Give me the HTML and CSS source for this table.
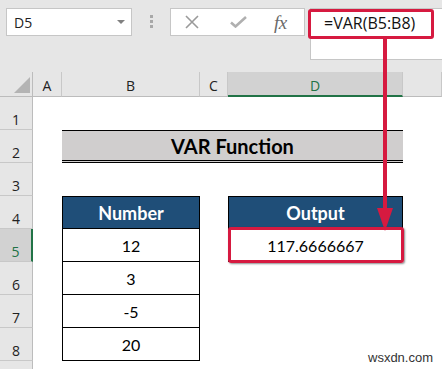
FILE: index.html
```html
<!DOCTYPE html>
<html>
<head>
<meta charset="utf-8">
<title>VAR Function</title>
<link rel="stylesheet" href="styles.css">
</head>
<body>
<div class="app">
  <div class="toolbar">
    <div class="namebox"><span>D5</span><span class="caret"></span></div>
    <div class="grip"><i></i><i></i><i></i></div>
    <div class="fbuttons">
      <svg class="ic-x" width="14" height="14" viewBox="0 0 14 14"><path d="M1 1L13 13M13 1L1 13" stroke="#9a9a9a" stroke-width="1.6" fill="none"/></svg>
      <svg class="ic-check" width="17" height="12" viewBox="0 0 17 12"><path d="M1 6.5L5.5 10.5L16 1" stroke="#b0b0b0" stroke-width="2.6" fill="none"/></svg>
      <span class="fx">fx</span>
    </div>
    <div class="finput">=VAR(B5:B8)</div>
  </div>

  <div class="sheet">
    <div class="corner"><span class="tri"></span></div>
    <div class="ch">A</div><div class="ch">B</div><div class="ch">C</div><div class="ch sel">D</div><div class="ch"></div>

    <div class="rh">1</div><div></div><div></div><div></div><div></div><div></div>

    <div class="rh">2</div><div></div><div class="title">VAR Function</div><div></div>

    <div class="rh">3</div><div></div><div></div><div></div><div></div><div></div>

    <div class="rh">4</div><div></div><div class="th">Number</div><div></div><div class="th">Output</div><div></div>

    <div class="rh sel">5</div><div></div><div class="td">12</div><div></div><div class="td">117.6666667</div><div></div>

    <div class="rh">6</div><div></div><div class="td">3</div><div></div><div></div><div></div>

    <div class="rh">7</div><div></div><div class="td">-5</div><div></div><div></div><div></div>

    <div class="rh">8</div><div></div><div class="td">20</div><div></div><div></div><div></div>

    <div class="rh"></div><div></div><div></div><div></div><div></div><div></div>
  </div>

  <div class="hl hl-formula"></div>
  <svg class="arrow" width="20" height="196" viewBox="0 0 20 196"><path d="M10 2V176" stroke="#d61a40" stroke-width="4" fill="none"/><polygon points="2,171 18,171 10,194" fill="#d61a40"/></svg>
  <div class="hl hl-out"></div>
  <div class="wm">wsxdn.com</div>
</div>
</body>
</html>
```

FILE: styles.css
```css
body {
  margin: 0;
  background: #fff;
}

.app {
  position: relative;
  width: 442px;
  height: 369px;
  overflow: hidden;
  font-family: "Open Sans", "Noto Sans", sans-serif;
  color: #222;
}

/* ---------- formula bar ---------- */
.toolbar {
  display: flex;
  align-items: flex-start;
  height: 72px;
  box-sizing: border-box;
  padding: 8px 0 0 6px;
  background: #e6e6e6;
}

.namebox {
  width: 126px;
  height: 28px;
  box-sizing: border-box;
  background: #fff;
  border: 1px solid #c6c6c6;
  display: flex;
  align-items: center;
  justify-content: space-between;
  padding: 0 6px 0 7px;
  font-size: 14px;
  color: #222;
}

.caret {
  width: 0;
  height: 0;
  border-left: 4px solid transparent;
  border-right: 4px solid transparent;
  border-top: 4px solid #808080;
}

.grip {
  display: flex;
  flex-direction: column;
  gap: 2px;
  margin: 7px 0 0 18px;
}

.grip i {
  display: block;
  width: 3px;
  height: 3px;
  background: #a8a8a8;
}

.fbuttons {
  margin-left: 17px;
  width: 135px;
  height: 28px;
  box-sizing: border-box;
  background: #fff;
  border: 1px solid #c6c6c6;
  display: flex;
  align-items: center;
}

.ic-x {
  margin-left: 14px;
}

.ic-check {
  margin-left: 31px;
}

.fx {
  margin-left: 27px;
  font-family: "Liberation Serif", "DejaVu Serif", serif;
  font-style: italic;
  font-size: 19px;
  color: #6a6a6a;
  line-height: 1;
  letter-spacing: -0.5px;
}

.finput {
  margin-left: 5px;
  flex: 1;
  height: 52px;
  box-sizing: border-box;
  background: #fff;
  border: 1px solid #c6c6c6;
  border-right: none;
  padding: 3px 0 0 13px;
  font-size: 16px;
  line-height: 22px;
  color: #111;
}

/* ---------- sheet grid ---------- */
.sheet {
  display: grid;
  grid-template-columns: 33px 29px 138px 28px 175px 39px;
  grid-template-rows: 25px repeat(9, 33px);
}

.corner,
.ch,
.rh {
  background: #e6e6e6;
  box-sizing: border-box;
  display: flex;
  justify-content: center;
  align-items: flex-end;
  font-size: 14px;
  line-height: 19px;
  color: #222;
}

.corner {
  justify-content: flex-end;
  padding: 0 2px 3px 0;
  border-right: 1px solid #bcbcbc;
  border-bottom: 1px solid #bcbcbc;
}

.tri {
  width: 0;
  height: 0;
  border-left: 16px solid transparent;
  border-bottom: 16px solid #b4b4b4;
}

.ch {
  border-right: 1px solid #c8c8c8;
  border-bottom: 1px solid #bcbcbc;
  padding-bottom: 1px;
}

.ch.sel {
  background: #d2d2d2;
  color: #217346;
  border-bottom: 2px solid #217346;
  padding-bottom: 0;
}

.rh {
  border-right: 1px solid #bcbcbc;
  border-bottom: 1px solid #c8c8c8;
}

.rh.sel {
  background: #d2d2d2;
  color: #217346;
  border-right: 2px solid #217346;
}

.title,
.th,
.td {
  box-sizing: border-box;
  display: flex;
  align-items: center;
  justify-content: center;
  font-family: Lato, "Open Sans", sans-serif;
  color: #000;
}

.title {
  grid-column: span 3;
  background: #d0cece;
  border-top: 1px solid #000;
  border-bottom: 3px double #000;
  font-size: 20px;
  font-weight: 700;
}

.th {
  background: #1f4e78;
  color: #fff;
  border: 1px solid #000;
  font-size: 18px;
  font-weight: 700;
}

.td {
  border: 1px solid #000;
  border-top: none;
  font-size: 16px;
}

/* ---------- overlays ---------- */
.hl {
  position: absolute;
  box-sizing: border-box;
  border: 3px solid #d61a40;
  border-radius: 3px;
}

.hl-formula {
  left: 308px;
  top: 9px;
  width: 126px;
  height: 30px;
}

.hl-out {
  left: 228px;
  top: 227px;
  width: 176px;
  height: 36px;
  box-shadow: 1px 1px 2px rgba(0, 0, 0, 0.45);
}

.arrow {
  position: absolute;
  left: 375px;
  top: 37px;
}

.wm {
  position: absolute;
  left: 368px;
  top: 350px;
  font-family: "Liberation Sans", Arial, sans-serif;
  font-size: 13px;
  color: #333;
}
```
